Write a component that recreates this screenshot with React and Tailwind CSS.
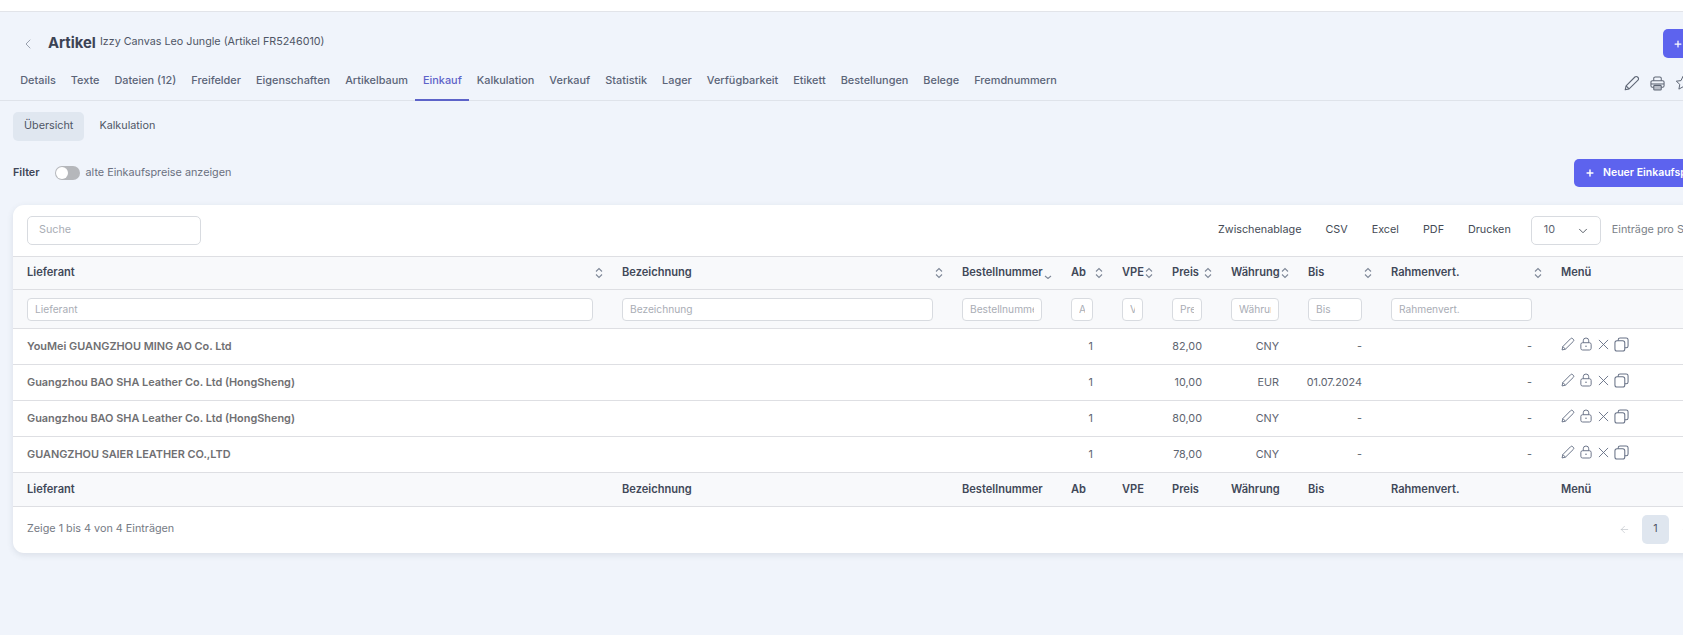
import { ChevronDown, ChevronLeft, ArrowLeft, ArrowRight, Plus } from "lucide-react";

const tabs = ["Details", "Texte", "Dateien (12)", "Freifelder", "Eigenschaften", "Artikelbaum", "Einkauf", "Kalkulation", "Verkauf", "Statistik", "Lager", "Verfügbarkeit", "Etikett", "Bestellungen", "Belege", "Fremdnummern"];

const columns = [
   { name: "Lieferant", width: "w-[595px]" },
   { name: "Bezeichnung", width: "w-[340px]" },
   { name: "Bestellnummer", width: "w-[109px]", sortDown: true },
   { name: "Ab", width: "w-[51px]" },
   { name: "VPE", width: "w-[50px]" },
   { name: "Preis", width: "w-[59px]" },
   { name: "Währung", width: "w-[77px]" },
   { name: "Bis", width: "w-[83px]" },
   { name: "Rahmenvert.", width: "w-[170px]" },
   { name: "Menü", width: "w-[188px]", noSort: true },
];

const rows = [
   { supplier: "YouMei GUANGZHOU MING AO Co. Ltd", price: "82,00", currency: "CNY", until: "-" },
   { supplier: "Guangzhou BAO SHA Leather Co. Ltd (HongSheng)", price: "10,00", currency: "EUR", until: "01.07.2024" },
   { supplier: "Guangzhou BAO SHA Leather Co. Ltd (HongSheng)", price: "80,00", currency: "CNY", until: "-" },
   { supplier: "GUANGZHOU SAIER LEATHER CO.,LTD", price: "78,00", currency: "CNY", until: "-" },
];

function PencilIcon({ className }) {
   return (
      <svg viewBox="0 0 16 16" fill="none" stroke="currentColor" strokeWidth="1.1" strokeLinejoin="round" className={className}>
         <path d="M1.2 14.8l.9-3.9L10.9 2a1.8 1.8 0 0 1 2.6 0l.5.5a1.8 1.8 0 0 1 0 2.6L5.1 13.9z" />
         <path d="M2.1 10.9l3 3" />
      </svg>
   );
}

function LockIcon({ className }) {
   return (
      <svg viewBox="0 0 14 16" fill="none" stroke="currentColor" strokeWidth="1.1" className={className}>
         <rect x="1" y="6.5" width="12" height="8.5" rx="2" />
         <path d="M3.8 6.5V4.200a3.200 3.200 0 0 1 6.400 0v2.300" />
         <circle cx="7" cy="10.700" r="0.900" fill="currentColor" stroke="none" />
      </svg>
   );
}

function CloseIcon({ className }) {
   return (
      <svg viewBox="0 0 12 12" fill="none" stroke="currentColor" strokeWidth="1" className={className}>
         <path d="M1 1l10 10M11 1L1 11" />
      </svg>
   );
}

function CopyIcon({ className }) {
   return (
      <svg viewBox="0 0 16 16" fill="none" stroke="currentColor" strokeWidth="1.1" className={className}>
         <rect x="1" y="4" width="10.500" height="11" rx="2.200" />
         <path d="M4.500 4V3a2 2 0 0 1 2-2H13a2 2 0 0 1 2 2v6.500a2 2 0 0 1-2 2h-1.500" />
      </svg>
   );
}

function PrinterIcon({ className }) {
   return (
      <svg viewBox="0 0 16 16" fill="none" stroke="currentColor" strokeWidth="1.1" className={className}>
         <path d="M4 5V2.500A1.500 1.500 0 0 1 5.500 1h5A1.500 1.500 0 0 1 12 2.500V5" />
         <path d="M4 12H2.500A1.500 1.500 0 0 1 1 10.500V6.500A1.500 1.500 0 0 1 2.500 5h11A1.500 1.500 0 0 1 15 6.500v4a1.500 1.500 0 0 1-1.500 1.500H12" />
         <path d="M1 8.500h14" />
         <rect x="4" y="10" width="8" height="5" rx="1" fill="#b9bec8" />
      </svg>
   );
}

function StarIcon({ className }) {
   return (
      <svg viewBox="0 0 16 16" fill="none" stroke="currentColor" strokeWidth="1" strokeLinejoin="round" className={className}>
         <path d="M8 1.300l2 4.300 4.700.6-3.500 3.200.9 4.700L8 11.800l-4.100 2.300.9-4.700L1.300 6.200 6 5.600z" />
      </svg>
   );
}

function SortIcon({ downOnly }) {
   return (
      <svg viewBox="0 0 8 12" fill="none" stroke="#7f8898" strokeWidth="1.1" className="absolute right-[5px] top-1/2 -translate-y-1/2 w-[8px] h-[12px]">
         {!downOnly && <path d="M1 4.500L4 1.500l3 3" />}
         <path d={downOnly ? "M1 9l3 2.500L7 9" : "M1 7.500l3 3 3-3"} />
      </svg>
   );
}

function App() {
   return (
      <div className="w-[1683px] h-[635px] overflow-hidden bg-[#f0f4fb] text-[10.8px] text-[#5e6470] font-['Inter',sans-serif]">
         <div className="h-[12px] bg-white border-b border-[#e2e4e9]" />
         <div className="w-[1748px]">
            {/* title */}
            <div className="flex items-center h-[29px] mt-[17px] pl-[20px] pr-[13px]">
               <ChevronLeft strokeWidth={1.1} className="w-[16px] h-[16px] text-[#7c8493]" />
               <span className="ml-[12px] text-[14.8px] font-bold text-[#3c4354]">Artikel</span>
               <span className="ml-[4px] text-[10.75px] text-[#4f5666] -mt-[2px]">Izzy Canvas Leo Jungle (Artikel FR5246010)</span>
               <button className="ml-auto w-[72px] h-[29px] flex items-center gap-2 pl-[10px] rounded-[5px] bg-[#5d63ee] text-white font-semibold">
                  <Plus strokeWidth={3} className="w-[10px] h-[10px] shrink-0" />
                  Neu
               </button>
            </div>

            {/* tabs */}
            <div className="flex items-stretch h-[43px] pl-[12.7px] pr-[13px] border-b border-[#dfe3ea] text-[10.9px]">
               {tabs.map((tab) => (
                  <a
                     key={tab}
                     className={
                        tab === "Einkauf"
                           ? "flex items-center pt-[3px] px-[7.5px] font-medium text-[#5d63c9] border-b-2 border-[#5d63c9] -mb-[1px]"
                           : "flex items-center pt-[3px] px-[7.5px] font-medium text-[#5b6478]"
                     }
                  >
                     {tab}
                  </a>
               ))}
               <div className="ml-auto flex items-center gap-[10px] pr-[44px] pt-[8px] text-[#5e6675]">
                  <PencilIcon className="w-[16px] h-[16px]" />
                  <PrinterIcon className="w-[15px] h-[15px]" />
                  <StarIcon className="w-[16px] h-[16px]" />
               </div>
            </div>

            <div className="px-[13px]">
               {/* sub navigation */}
               <div className="flex gap-[1px] mt-[11px]">
                  <a className="flex items-center h-[29px] px-[11px] rounded-[5px] bg-[#e0e7f0] text-[#4f5666]">Übersicht</a>
                  <a className="flex items-center h-[29px] px-[14px] text-[#4f5666]">Kalkulation</a>
               </div>

               {/* filter */}
               <div className="flex items-center h-[28px] mt-[18px]">
                  <span className="font-semibold text-[#3f4657]">Filter</span>
                  <span className="relative ml-[15px] w-[25px] h-[14px] rounded-full bg-[#b5b7bb]">
                     <span className="absolute left-[1px] top-[1px] w-[12px] h-[12px] rounded-full bg-white" />
                  </span>
                  <span className="ml-[6px] text-[#6a7080]">alte Einkaufspreise anzeigen</span>
                  <button className="ml-auto flex items-center w-[161px] h-[28px] pl-[11px] rounded-[5px] bg-[#5d63ee] text-white text-[10.5px] font-semibold whitespace-nowrap">
                     <Plus strokeWidth={3.5} className="w-[10px] h-[10px] mr-[8px] shrink-0" />
                     Neuer Einkaufspreis
                  </button>
               </div>

               {/* card */}
               <div className="mt-[18px] bg-white rounded-[11px] shadow-[0_2px_6px_rgba(60,70,90,0.12)]">
                  <div className="flex items-center h-[51px] px-[14px]">
                     <input placeholder="Suche" className="w-[174px] h-[29px] px-[11px] pb-[2px] rounded-[5px] border border-[#d8dbe0] placeholder:text-[#a9adb5] outline-none" />
                     <div className="ml-[1017px] flex items-center gap-[24px] text-[#444a55] whitespace-nowrap">
                        <span>Zwischenablage</span>
                        <span>CSV</span>
                        <span>Excel</span>
                        <span>PDF</span>
                        <span>Drucken</span>
                     </div>
                     <div className="ml-[20px] flex items-center justify-between w-[70px] h-[29px] pl-[12px] pr-[10px] rounded-[5px] border border-[#d8dbe0] text-[#5e6470]">
                        10
                        <ChevronDown strokeWidth={1.5} className="w-[14px] h-[14px] text-[#444a55]" />
                     </div>
                     <span className="ml-[11px] text-[#7a7f88] whitespace-nowrap">Einträge pro Seite</span>
                  </div>

                  <table className="w-[1722px] table-fixed border-collapse">
                     <thead>
                        <tr className="h-[33px] bg-[#f8f9fb] border-y border-[#dedfe3]">
                           {columns.map((col) => (
                              <th key={col.name} className={`${col.width} relative pl-[14px] pb-[2px] text-left text-[11.1px] font-semibold text-[#414858] whitespace-nowrap`}>
                                 {col.name}
                                 {!col.noSort && <SortIcon downOnly={col.sortDown} />}
                              </th>
                           ))}
                        </tr>
                        <tr className="h-[39px] bg-[#f8f9fb] border-b border-[#dedfe3]">
                           {columns.map((col) => (
                              <td key={col.name} className="pl-[14px] pr-[15px]">
                                 {!col.noSort && (
                                    <input
                                       placeholder={col.name}
                                       className="block w-full h-[23px] px-[7px] bg-white rounded-[4px] border border-[#d8dbe0] text-[10.2px] placeholder:text-[#a9adb5] outline-none"
                                    />
                                 )}
                              </td>
                           ))}
                        </tr>
                     </thead>
                     <tbody>
                        {rows.map((row, i) => (
                           <tr key={i} className="h-[36px] border-b border-[#dedfe3]">
                              <td className="pl-[14px] text-[10.9px] font-semibold text-[#6f6f72] whitespace-nowrap">{row.supplier}</td>
                              <td />
                              <td />
                              <td className="pr-[15px] pt-[1px] text-right">1</td>
                              <td />
                              <td className="pr-[15px] pt-[1px] text-right">{row.price}</td>
                              <td className="pr-[15px] pt-[1px] text-right">{row.currency}</td>
                              <td className="pr-[15px] pt-[1px] text-right">{row.until}</td>
                              <td className="pr-[15px] pt-[1px] text-right">-</td>
                              <td className="pl-[14px]">
                                 <div className="flex items-center -mt-[5px] text-[#667085]">
                                    <PencilIcon className="w-[14px] h-[14px]" />
                                    <LockIcon className="ml-[5px] w-[12px] h-[14px]" />
                                    <CloseIcon className="ml-[6px] w-[11px] h-[11px]" />
                                    <CopyIcon className="ml-[5px] w-[15px] h-[15px]" />
                                 </div>
                              </td>
                           </tr>
                        ))}
                     </tbody>
                     <tfoot>
                        <tr className="h-[34px] bg-[#f8f9fb] border-b border-[#dedfe3]">
                           {columns.map((col) => (
                              <th key={col.name} className="pl-[14px] text-left text-[11.1px] font-semibold text-[#414858] whitespace-nowrap">{col.name}</th>
                           ))}
                        </tr>
                     </tfoot>
                  </table>

                  <div className="flex items-center h-[46px] pb-[2px] px-[14px]">
                     <span className="text-[#757a84]">Zeige 1 bis 4 von 4 Einträgen</span>
                     <div className="ml-auto flex items-center pr-[29px]">
                        <ArrowLeft strokeWidth={1.25} className="w-[11px] h-[11px] text-[#b4b8bf]" />
                        <span className="ml-[12px] flex items-center justify-center w-[27px] h-[29px] rounded-[5px] bg-[#dfe6ef] text-[#4f5666]">1</span>
                        <ArrowRight strokeWidth={1.25} className="ml-[12px] w-[11px] h-[11px] text-[#b4b8bf]" />
                     </div>
                  </div>
               </div>
            </div>
         </div>
      </div>
   );
}

export default App;
